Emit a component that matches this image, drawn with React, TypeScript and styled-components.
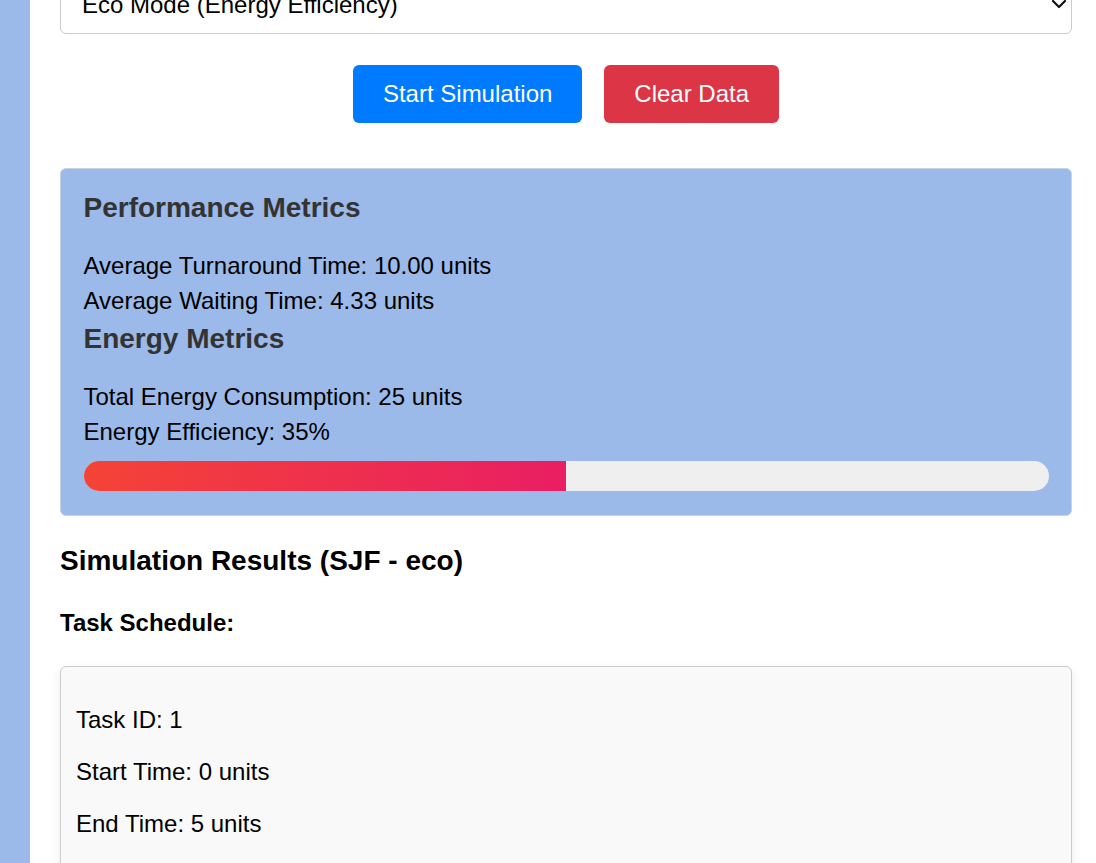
import React from "react";
import styled, { createGlobalStyle } from "styled-components";
import { ChevronDown } from "lucide-react";

const GlobalStyle = createGlobalStyle`
  html, body {
    margin: 0;
    padding: 0;
    background: #9bb9e9;
    overflow: hidden;
  }
  body {
    font-family: "Liberation Sans", Arial, sans-serif;
    color: #000;
  }
`;

const Page = styled.div`
  margin-left: 30px;
  margin-top: -26px;
  width: 1066px;
  box-sizing: border-box;
  padding: 0 24px 40px 30px;
  background: #fff;
  min-height: 900px;
`;

const SelectWrap = styled.div`
  position: relative;
  width: 100%;
`;

const ModeSelect = styled.select`
  appearance: none;
  -webkit-appearance: none;
  display: block;
  width: 100%;
  height: 60px;
  box-sizing: border-box;
  padding: 0 40px 0 21px;
  font-family: "Liberation Sans", Arial, sans-serif;
  font-size: 24px;
  color: #000;
  background: #fff;
  border: 1px solid #ccc;
  border-radius: 6px;
`;

const Chevron = styled.span`
  position: absolute;
  right: 1px;
  top: 50%;
  transform: translateY(-50%);
  display: flex;
  pointer-events: none;
  color: #111;
`;

const ButtonRow = styled.div`
  display: flex;
  justify-content: center;
  gap: 22px;
  margin-top: 31px;
  margin-bottom: 45px;
`;

const ActionButton = styled.button<{ $variant: "primary" | "danger" }>`
  font-family: "Liberation Sans", Arial, sans-serif;
  font-size: 24px;
  line-height: 28px;
  padding: 15px 30px;
  border: none;
  border-radius: 6px;
  color: #fff;
  cursor: pointer;
  background: ${(p) => (p.$variant === "primary" ? "#007bff" : "#dc3545")};
`;

const MetricsPanel = styled.section`
  background: #9bb9e9;
  border: 1px solid #c9d2df;
  border-radius: 6px;
  padding: 23px 22.5px 23.5px;
  margin-bottom: 29px;
`;

const PanelTitle = styled.h3<{ $first?: boolean }>`
  margin: ${(p) => (p.$first ? "0 0 24px" : "5px 0 24px")};
  font-size: 28px;
  line-height: 32px;
  font-weight: 700;
  color: #333;
`;

const MetricLine = styled.p`
  margin: 0;
  font-size: 24px;
  line-height: 35px;
`;

const Track = styled.div`
  margin-top: 12px;
  height: 30px;
  border-radius: 15px;
  background: #efefef;
  overflow: hidden;
`;

const Fill = styled.div`
  height: 100%;
  background: linear-gradient(to right, #f44336, #e91e63);
`;

const SectionTitle = styled.h3`
  margin: 0 0 32px;
  font-size: 28px;
  line-height: 32px;
  font-weight: 700;
  color: #000;
`;

const SubTitle = styled.h4`
  margin: 0 0 29px;
  font-size: 24px;
  line-height: 28px;
  font-weight: 700;
  color: #000;
`;

const TaskCard = styled.div`
  background: #f9f9f9;
  border: 1px solid #ccc;
  border-radius: 6px;
  padding: 15px;
  box-shadow: 0 3px 10px rgba(0, 0, 0, 0.08);
`;

const TaskLine = styled.p`
  margin: 24px 0;
  font-size: 24px;
  line-height: 28px;
`;

export default function App() {
  const efficiency = 50;
  return (
    <>
      <GlobalStyle />
      <Page>
        <SelectWrap>
          <ModeSelect defaultValue="eco">
            <option value="performance">Performance Mode</option>
            <option value="eco">Eco Mode (Energy Efficiency)</option>
          </ModeSelect>
          <Chevron>
            <ChevronDown size={24} strokeWidth={2.2} />
          </Chevron>
        </SelectWrap>

        <ButtonRow>
          <ActionButton $variant="primary">Start Simulation</ActionButton>
          <ActionButton $variant="danger">Clear Data</ActionButton>
        </ButtonRow>

        <MetricsPanel>
          <PanelTitle $first>Performance Metrics</PanelTitle>
          <MetricLine>Average Turnaround Time: 10.00 units</MetricLine>
          <MetricLine>Average Waiting Time: 4.33 units</MetricLine>
          <PanelTitle>Energy Metrics</PanelTitle>
          <MetricLine>Total Energy Consumption: 25 units</MetricLine>
          <MetricLine>Energy Efficiency: 35%</MetricLine>
          <Track>
            <Fill style={{ width: `${efficiency}%` }} />
          </Track>
        </MetricsPanel>

        <SectionTitle>Simulation Results (SJF - eco)</SectionTitle>
        <SubTitle>Task Schedule:</SubTitle>

        <TaskCard>
          <TaskLine>Task ID: 1</TaskLine>
          <TaskLine>Start Time: 0 units</TaskLine>
          <TaskLine>End Time: 5 units</TaskLine>
        </TaskCard>
      </Page>
    </>
  );
}
